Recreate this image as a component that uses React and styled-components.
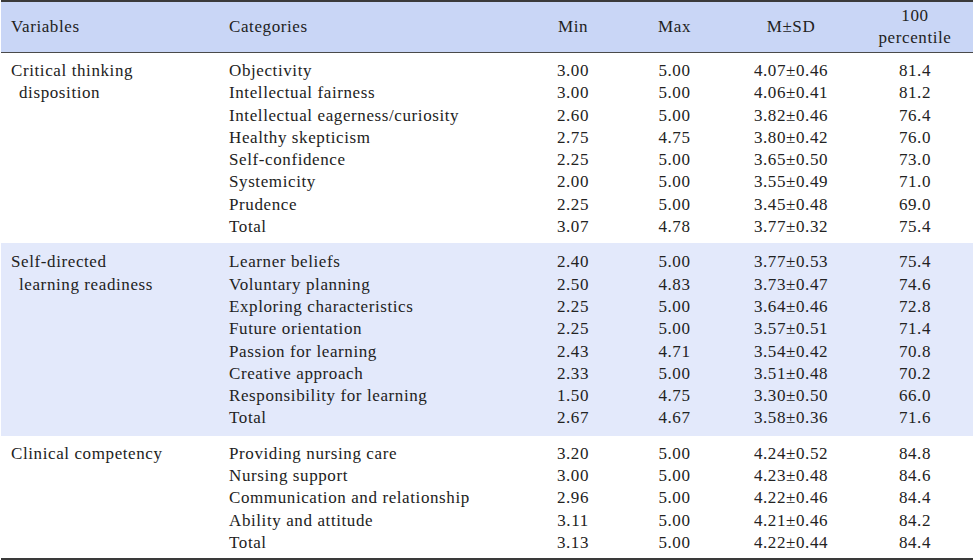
import React from 'react';
import styled, { createGlobalStyle } from 'styled-components';

const GlobalStyle = createGlobalStyle`
  html, body {
    margin: 0;
    padding: 0;
    background: #ffffff;
  }
  body {
    font-family: "Liberation Serif", "Times New Roman", serif;
    color: #222222;
  }
`;

const Page = styled.div`
  width: 973px;
  height: 560px;
`;

const Table = styled.table`
  width: 972px;
  margin-left: 1px;
  border-collapse: collapse;
  table-layout: fixed;
  font-size: 17px;
  letter-spacing: 0.6px;
  border-top: 2px solid #3a3a3a;
  border-bottom: 2px solid #3a3a3a;
`;

const Head = styled.thead`
  background: #c9d6f6;
  border-bottom: 1px solid #4a4a4a;
`;

const Th = styled.th`
  font-weight: normal;
  height: 50px;
  padding: 0;
  line-height: 22px;
  text-align: ${(p) => (p.$left ? 'left' : 'center')};
  padding-left: ${(p) => p.$pad || 0}px;
  width: ${(p) => p.$w}px;
`;

const Group = styled.tbody`
  background: ${(p) => (p.$shaded ? '#e3e9fb' : '#ffffff')};
  tr:first-child td {
    padding-top: ${(p) => p.$top}px;
  }
  tr:last-child td {
    padding-bottom: ${(p) => p.$bottom}px;
  }
`;

const Td = styled.td`
  padding: 0;
  height: 22.3px;
  line-height: 22.3px;
  white-space: nowrap;
  text-align: ${(p) => (p.$left ? 'left' : 'center')};
  padding-left: ${(p) => p.$pad || 0}px;
`;

const VarCell = styled.td`
  vertical-align: top;
  line-height: 22.3px;
  padding: 0 0 0 10px;
  white-space: nowrap;
  tbody tr:first-child & {
    padding-top: ${(p) => p.$top}px;
  }
`;

const VarLine = styled.div`
  padding-left: ${(p) => (p.$cont ? 8 : 0)}px;
`;

const groups = [
  {
    name: ['Critical thinking', 'disposition'],
    shaded: false,
    top: 7,
    bottom: 5,
    rows: [
      ['Objectivity', '3.00', '5.00', '4.07±0.46', '81.4'],
      ['Intellectual fairness', '3.00', '5.00', '4.06±0.41', '81.2'],
      ['Intellectual eagerness/curiosity', '2.60', '5.00', '3.82±0.46', '76.4'],
      ['Healthy skepticism', '2.75', '4.75', '3.80±0.42', '76.0'],
      ['Self-confidence', '2.25', '5.00', '3.65±0.50', '73.0'],
      ['Systemicity', '2.00', '5.00', '3.55±0.49', '71.0'],
      ['Prudence', '2.25', '5.00', '3.45±0.48', '69.0'],
      ['Total', '3.07', '4.78', '3.77±0.32', '75.4'],
    ],
  },
  {
    name: ['Self-directed', 'learning readiness'],
    shaded: true,
    top: 8,
    bottom: 6,
    rows: [
      ['Learner beliefs', '2.40', '5.00', '3.77±0.53', '75.4'],
      ['Voluntary planning', '2.50', '4.83', '3.73±0.47', '74.6'],
      ['Exploring characteristics', '2.25', '5.00', '3.64±0.46', '72.8'],
      ['Future orientation', '2.25', '5.00', '3.57±0.51', '71.4'],
      ['Passion for learning', '2.43', '4.71', '3.54±0.42', '70.8'],
      ['Creative approach', '2.33', '5.00', '3.51±0.48', '70.2'],
      ['Responsibility for learning', '1.50', '4.75', '3.30±0.50', '66.0'],
      ['Total', '2.67', '4.67', '3.58±0.36', '71.6'],
    ],
  },
  {
    name: ['Clinical competency'],
    shaded: false,
    top: 7,
    bottom: 4,
    rows: [
      ['Providing nursing care', '3.20', '5.00', '4.24±0.52', '84.8'],
      ['Nursing support', '3.00', '5.00', '4.23±0.48', '84.6'],
      ['Communication and relationship', '2.96', '5.00', '4.22±0.46', '84.4'],
      ['Ability and attitude', '3.11', '5.00', '4.21±0.46', '84.2'],
      ['Total', '3.13', '5.00', '4.22±0.44', '84.4'],
    ],
  },
];

const App = () => {
  return (
    <Page>
      <GlobalStyle />
      <Table>
        <Head>
          <tr>
            <Th $left $pad={10} $w={208}>Variables</Th>
            <Th $left $pad={10} $w={293}>Categories</Th>
            <Th $w={102}>Min</Th>
            <Th $w={101}>Max</Th>
            <Th $w={132}>M±SD</Th>
            <Th>100<br />percentile</Th>
          </tr>
        </Head>
        {groups.map((g) => (
          <Group key={g.name[0]} $shaded={g.shaded} $top={g.top} $bottom={g.bottom}>
            {g.rows.map((r, i) => (
              <tr key={r[0]}>
                {i === 0 && (
                  <VarCell rowSpan={g.rows.length} $top={g.top}>
                    {g.name.map((line, j) => (
                      <VarLine key={line} $cont={j > 0}>{line}</VarLine>
                    ))}
                  </VarCell>
                )}
                <Td $left $pad={10}>{r[0]}</Td>
                <Td>{r[1]}</Td>
                <Td>{r[2]}</Td>
                <Td>{r[3]}</Td>
                <Td>{r[4]}</Td>
              </tr>
            ))}
          </Group>
        ))}
      </Table>
    </Page>
  );
};

export default App;
